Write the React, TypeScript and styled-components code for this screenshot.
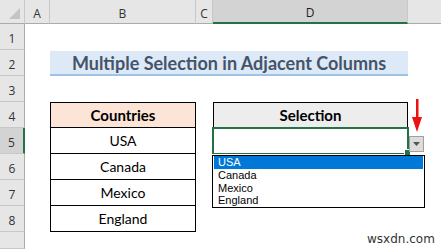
import styled, { createGlobalStyle } from "styled-components";

const GlobalStyle = createGlobalStyle`
  html, body {
    margin: 0;
    padding: 0;
    background: #fff;
    overflow: hidden;
  }
`;

const countries = ["USA", "Canada", "Mexico", "England"];
const rows = [1, 2, 3, 4, 5, 6, 7, 8];

const App = () => {
  return (
    <>
      <GlobalStyle />
      <Sheet>
        <Corner>
          <CornerTriangle />
        </Corner>
        <ColHead>A</ColHead>
        <ColHead>B</ColHead>
        <ColHead>C</ColHead>
        <ColHead $active>D</ColHead>
        <ColHead $blank />

        {rows.map((r) => (
          <RowHead key={r} $row={r + 1} $active={r === 5}>
            {r}
          </RowHead>
        ))}
        <RowHead $row={10} />

        <Title>Multiple Selection in Adjacent Columns</Title>

        <CountryCell $row={5} $head>
          Countries
        </CountryCell>
        {countries.map((c, i) => (
          <CountryCell key={c} $row={6 + i}>
            {c}
          </CountryCell>
        ))}

        <SelectionHead>Selection</SelectionHead>
        <ActiveCell>
          <FillHandle />
        </ActiveCell>

        <Overlay>
          <RedArrow width="12" height="34" viewBox="0 0 12 34">
            <rect x="5" y="0" width="2.5" height="20" fill="#ee1111" />
            <polygon points="1,18 11,18 6,33" fill="#ee1111" />
          </RedArrow>
          <DropButton>
            <svg width="7" height="4" viewBox="0 0 7 4">
              <polygon points="0,0 7,0 3.5,4" fill="#555" />
            </svg>
          </DropButton>
          <List>
            {countries.map((c, i) => (
              <ListItem key={c} $selected={i === 0}>
                {c}
              </ListItem>
            ))}
          </List>
          <Watermark>wsxdn.com</Watermark>
        </Overlay>
      </Sheet>
    </>
  );
};

export default App;

const Sheet = styled.div`
  position: relative;
  width: 441px;
  height: 249px;
  display: grid;
  grid-template-columns: 25px 25px 146px 17px 195px 1fr;
  grid-template-rows: 24px repeat(8, 26px) 1fr;
  font-family: Lato, "Open Sans", sans-serif;
  background: #fff;
  overflow: hidden;
`;

const Corner = styled.div`
  grid-column: 1;
  grid-row: 1;
  position: relative;
  background: #e6e6e6;
  border-right: 1px solid #c8c8c8;
  border-bottom: 1px solid #ababab;
`;

const CornerTriangle = styled.div`
  position: absolute;
  right: 4px;
  bottom: 4px;
  width: 0;
  height: 0;
  border-left: 11px solid transparent;
  border-bottom: 11px solid #c4c4c4;
`;

const ColHead = styled.div<{ $active?: boolean; $blank?: boolean }>`
  grid-row: 1;
  display: flex;
  align-items: center;
  justify-content: center;
  padding-top: 3px;
  box-sizing: border-box;
  font-family: "Open Sans", "Noto Sans", sans-serif;
  font-size: 12px;
  color: ${(p) => (p.$active ? "#1e1e1e" : "#333")};
  background: ${(p) => (p.$active ? "#d3d3d3" : "#e6e6e6")};
  border-right: ${(p) => (p.$blank ? "none" : "1px solid #c8c8c8")};
  border-bottom: ${(p) =>
    p.$active ? "2px solid #217346" : "1px solid #ababab"};
`;

const RowHead = styled.div<{ $row: number; $active?: boolean }>`
  grid-column: 1;
  grid-row: ${(p) => p.$row};
  display: flex;
  align-items: center;
  justify-content: center;
  padding-top: 3px;
  box-sizing: border-box;
  font-family: "Open Sans", "Noto Sans", sans-serif;
  font-size: 12px;
  color: #333;
  background: ${(p) => (p.$active ? "#d3d3d3" : "#e6e6e6")};
  border-bottom: 1px solid #c8c8c8;
  border-right: ${(p) =>
    p.$active ? "2px solid #217346" : "1px solid #ababab"};
`;

const Title = styled.div`
  grid-column: 3 / 6;
  grid-row: 3;
  display: flex;
  align-items: center;
  justify-content: center;
  margin-top: 1px;
  box-sizing: border-box;
  background: #dde9f6;
  border-bottom: 2px solid #9dc3e6;
  color: #44546a;
  font-size: 18px;
  font-weight: 700;
`;

const CountryCell = styled.div<{ $row: number; $head?: boolean }>`
  grid-column: 3;
  grid-row: ${(p) => p.$row};
  display: flex;
  align-items: center;
  justify-content: center;
  box-sizing: border-box;
  margin-top: ${(p) => (p.$head ? "0" : "-1px")};
  border: 1px solid #000;
  background: ${(p) => (p.$head ? "#fce4d6" : "#fff")};
  color: #000;
  font-size: 14px;
  font-weight: ${(p) => (p.$head ? 700 : 400)};
  ${(p) => (p.$head ? "font-size: 15px;" : "")}
`;

const SelectionHead = styled.div`
  grid-column: 5;
  grid-row: 5;
  display: flex;
  align-items: center;
  justify-content: center;
  box-sizing: border-box;
  border: 1px solid #000;
  background: #ededed;
  color: #000;
  font-size: 15px;
  font-weight: 700;
`;

const ActiveCell = styled.div`
  grid-column: 5;
  grid-row: 6;
  position: relative;
  margin: -1px -1px 0 -1px;
  border: 2px solid #217346;
  border-bottom-width: 1px;
  box-sizing: border-box;
  background: #fff;
`;

const FillHandle = styled.div`
  position: absolute;
  right: -4px;
  bottom: -3px;
  width: 5px;
  height: 5px;
  background: #217346;
  border: 1px solid #fff;
`;

const Overlay = styled.div`
  position: absolute;
  inset: 0;
  pointer-events: none;
`;

const RedArrow = styled.svg`
  position: absolute;
  left: 411px;
  top: 99px;
`;

const DropButton = styled.div`
  position: absolute;
  left: 409px;
  top: 136px;
  width: 15px;
  height: 16px;
  box-sizing: border-box;
  display: flex;
  align-items: center;
  justify-content: center;
  background: #dcdcdc;
  border: 1px solid #a0a0a0;
`;

const List = styled.div`
  position: absolute;
  left: 212px;
  top: 155px;
  width: 213px;
  height: 53px;
  box-sizing: border-box;
  border: 1px solid #000;
  background: #fff;
  display: flex;
  flex-direction: column;
  padding: 0 1px;
`;

const ListItem = styled.div<{ $selected?: boolean }>`
  height: 13px;
  line-height: 13px;
  padding-left: 4px;
  overflow: hidden;
  font-family: "Liberation Sans", Arial, sans-serif;
  font-size: 11px;
  color: ${(p) => (p.$selected ? "#fff" : "#000")};
  background: ${(p) => (p.$selected ? "#0078d7" : "transparent")};
`;

const Watermark = styled.div`
  position: absolute;
  left: 367px;
  top: 232px;
  font-family: "DejaVu Sans", sans-serif;
  font-size: 12px;
  color: #333;
`;
